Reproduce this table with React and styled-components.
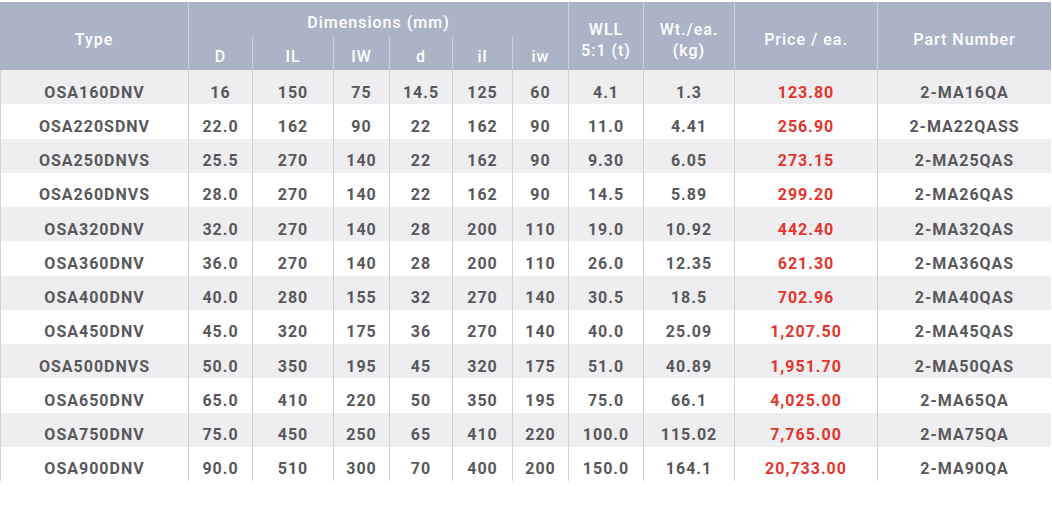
import React from "react";
import styled, { createGlobalStyle } from "styled-components";

const Global = createGlobalStyle`
  html, body { margin: 0; padding: 0; background: #ffffff; }
  body { font-family: Roboto, "Liberation Sans", sans-serif; }
`;

const Wrap = styled.div`
  padding-top: 2px;
  width: 1052px;
`;

const Table = styled.table`
  width: 1051px;
  table-layout: fixed;
  border-collapse: separate;
  border-spacing: 0;
  font-family: Roboto, "Liberation Sans", sans-serif;
  letter-spacing: 1px;
`;

const HeadCell = styled.th`
  background: #abb4c6;
  color: #ffffff;
  font-weight: 500;
  font-size: 16px;
  line-height: 21px;
  height: 34px;
  padding: 7px 0 0;
  box-sizing: border-box;
  text-align: center;
  vertical-align: middle;
  border-left: ${(p) => (p.$first ? "none" : "1px solid #c9cfdb")};
`;

const BodyRow = styled.tr`
  background: ${(p) => (p.$shade ? "#eeeef0" : "#ffffff")};
`;

const Cell = styled.td`
  height: 34.25px;
  padding: 11px 0 0;
  box-sizing: border-box;
  text-align: center;
  vertical-align: middle;
  font-size: 16px;
  font-weight: 700;
  line-height: 20px;
  color: ${(p) => (p.$price ? "#e3352b" : "#58585b")};
  border-left: 1px solid #d2d2d4;
  white-space: nowrap;
`;

const widths = [188, 64, 81, 56, 63, 60, 56, 75, 91, 143, 174];

const rows = [
  ["OSA160DNV", "16", "150", "75", "14.5", "125", "60", "4.1", "1.3", "123.80", "2-MA16QA"],
  ["OSA220SDNV", "22.0", "162", "90", "22", "162", "90", "11.0", "4.41", "256.90", "2-MA22QASS"],
  ["OSA250DNVS", "25.5", "270", "140", "22", "162", "90", "9.30", "6.05", "273.15", "2-MA25QAS"],
  ["OSA260DNVS", "28.0", "270", "140", "22", "162", "90", "14.5", "5.89", "299.20", "2-MA26QAS"],
  ["OSA320DNV", "32.0", "270", "140", "28", "200", "110", "19.0", "10.92", "442.40", "2-MA32QAS"],
  ["OSA360DNV", "36.0", "270", "140", "28", "200", "110", "26.0", "12.35", "621.30", "2-MA36QAS"],
  ["OSA400DNV", "40.0", "280", "155", "32", "270", "140", "30.5", "18.5", "702.96", "2-MA40QAS"],
  ["OSA450DNV", "45.0", "320", "175", "36", "270", "140", "40.0", "25.09", "1,207.50", "2-MA45QAS"],
  ["OSA500DNVS", "50.0", "350", "195", "45", "320", "175", "51.0", "40.89", "1,951.70", "2-MA50QAS"],
  ["OSA650DNV", "65.0", "410", "220", "50", "350", "195", "75.0", "66.1", "4,025.00", "2-MA65QA"],
  ["OSA750DNV", "75.0", "450", "250", "65", "410", "220", "100.0", "115.02", "7,765.00", "2-MA75QA"],
  ["OSA900DNV", "90.0", "510", "300", "70", "400", "200", "150.0", "164.1", "20,733.00", "2-MA90QA"],
];

const subHeads = ["D", "IL", "IW", "d", "il", "iw"];

export default function App() {
  return (
    <>
      <Global />
      <Wrap>
        <Table>
          <colgroup>
            {widths.map((w, i) => (
              <col key={i} style={{ width: w }} />
            ))}
          </colgroup>
          <thead>
            <tr>
              <HeadCell $first rowSpan={2}>Type</HeadCell>
              <HeadCell colSpan={6}>Dimensions (mm)</HeadCell>
              <HeadCell rowSpan={2}>
                WLL
                <br />
                5:1 (t)
              </HeadCell>
              <HeadCell rowSpan={2}>
                Wt./ea.
                <br />
                (kg)
              </HeadCell>
              <HeadCell rowSpan={2}>Price / ea.</HeadCell>
              <HeadCell rowSpan={2}>Part Number</HeadCell>
            </tr>
            <tr>
              {subHeads.map((h) => (
                <HeadCell key={h}>{h}</HeadCell>
              ))}
            </tr>
          </thead>
          <tbody>
            {rows.map((r, i) => (
              <BodyRow key={r[0]} $shade={i % 2 === 0}>
                {r.map((v, j) => (
                  <Cell key={j} $price={j === 9}>
                    {v}
                  </Cell>
                ))}
              </BodyRow>
            ))}
          </tbody>
        </Table>
      </Wrap>
    </>
  );
}
